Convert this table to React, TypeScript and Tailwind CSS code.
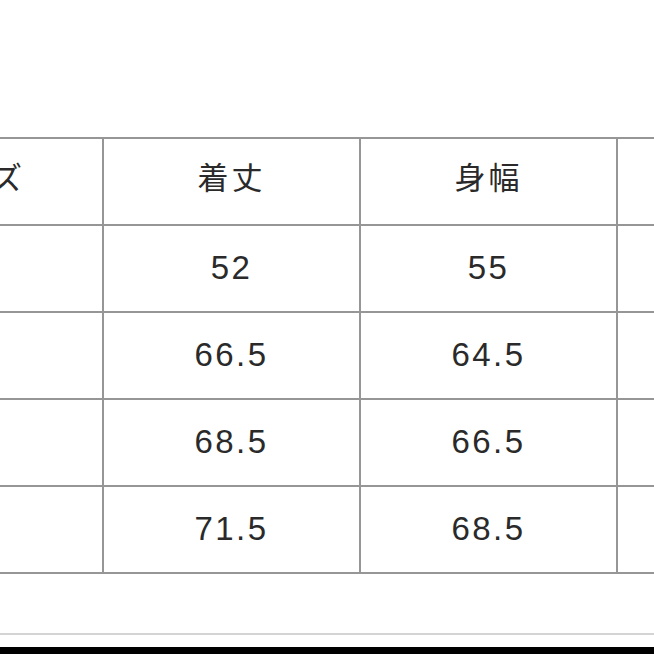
import React from "react";

const rows: string[][] = [
  ["サイズ", "着丈", "身幅", "袖丈"],
  ["S", "52", "55", "20"],
  ["M", "66.5", "64.5", "22"],
  ["L", "68.5", "66.5", "23"],
  ["XL", "71.5", "68.5", "24"],
];

export default function App() {
  return (
    <div
      className="w-[654px] h-[654px] bg-white overflow-hidden flex flex-col"
      style={{ fontFamily: '"Liberation Sans", "Noto Sans CJK JP", sans-serif' }}
    >
      <div className="pt-[137px] h-[633px]">
        <div className="ml-[-155px] w-[1030px] grid grid-cols-[255px_255px_255px_255px] auto-rows-[85px] gap-[2px] p-[2px] bg-[#969696]">
          {rows.map((r, i) =>
            r.map((c, j) => (
              <div
                key={`${i}-${j}`}
                className={`bg-white flex items-center justify-center text-[#2a2a2a] leading-none ${
                  i === 0 ? "pb-[6px] text-[31px] tracking-[3px]" : "pb-[2px] text-[33px] tracking-[2.5px]"
                }`}
              >
                {c}
              </div>
            ))
          )}
        </div>
      </div>
      <div className="h-[2px] bg-[#d4d4d4]" />
      <div className="h-[12px] bg-white" />
      <div className="flex-1 bg-black" />
    </div>
  );
}
